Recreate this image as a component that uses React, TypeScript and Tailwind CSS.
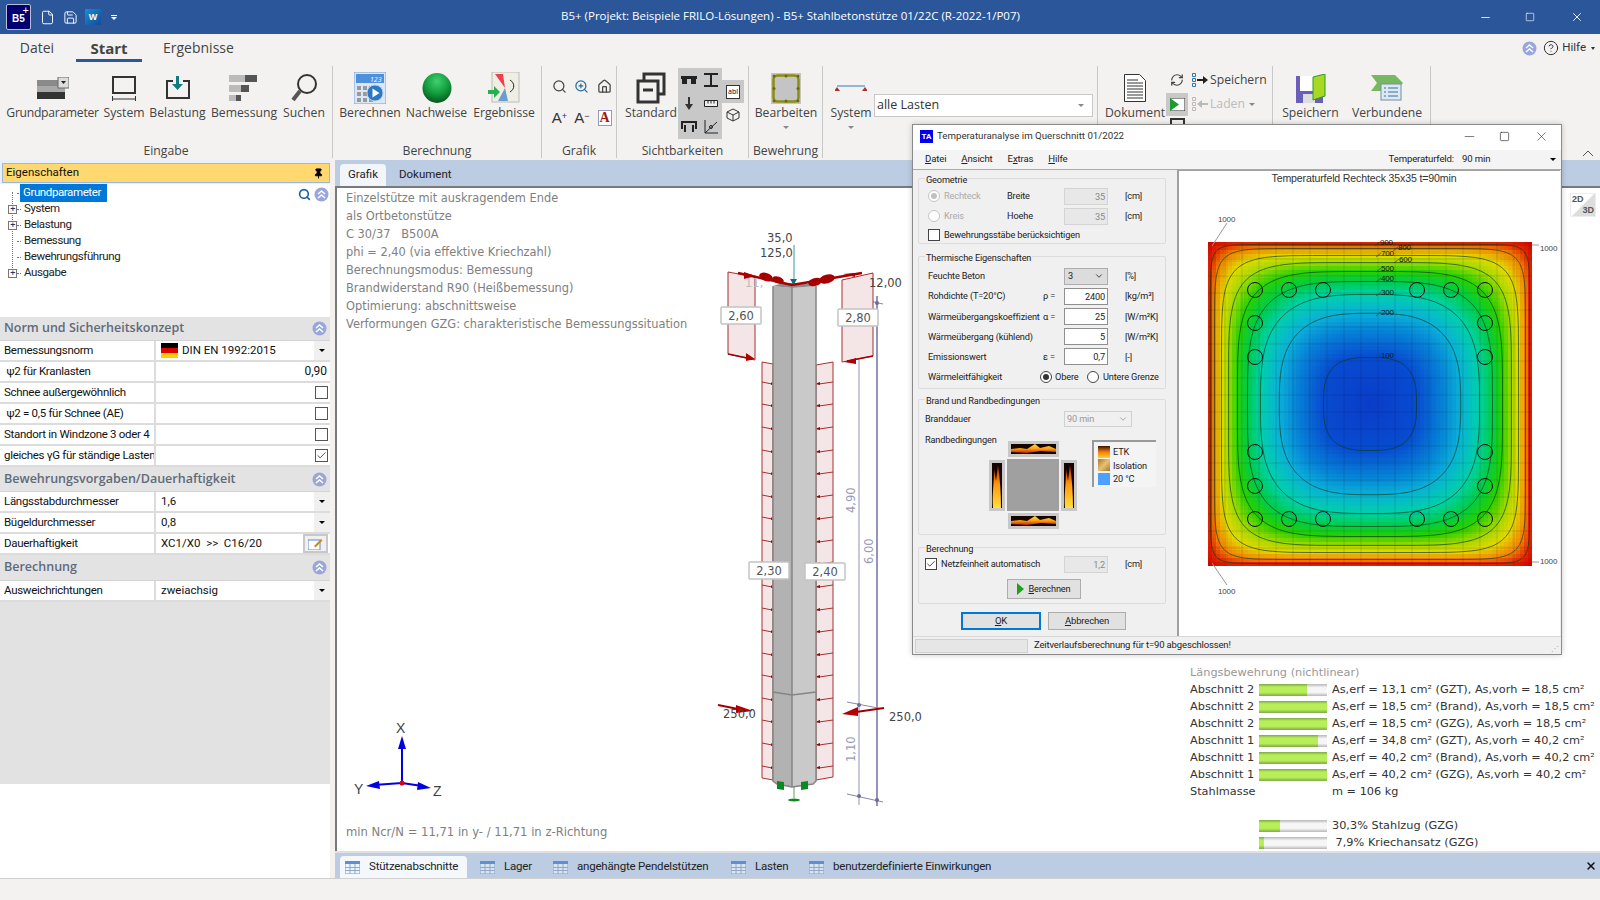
import type { ReactNode } from "react";
import { File, Save, Minus, Square, X, Search, ZoomIn, Home, HelpCircle, RefreshCw, Pin, Check, ChevronDown } from "lucide-react";

const ui = "font-['Open_Sans','Liberation_Sans',sans-serif]";

/* ---------- small shared bits ---------- */

const Chev = () => (
  <svg width="15" height="15" viewBox="0 0 15 15">
    <circle cx="7.5" cy="7.5" r="7" fill="#98a6dc" />
    <path d="M4 7l3.5-3 3.5 3M4 11l3.5-3 3.5 3" fill="none" stroke="#fff" strokeWidth="1.5" />
  </svg>
);

const Caret = () => <span className="block w-0 h-0 border-x-[3px] border-x-transparent border-t-[3px] border-t-[#888]" />;

const RibbonBtn = ({ w, label, icon, caret, tight }: { w: number; label: string; icon: ReactNode; caret?: boolean; tight?: boolean }) => (
  <div className="flex flex-col items-center shrink-0" style={{ width: w }}>
    <div className="h-[38px] pt-[6px] flex items-center justify-center">{icon}</div>
    <div className={"text-[12.2px] leading-[17px] text-[#444] whitespace-nowrap " + (tight ? "tracking-[-0.3px]" : "")}>{label}</div>
    {caret && <div className="mt-[5px]"><Caret /></div>}
  </div>
);

const RibbonGroup = ({ w, label, children, cls = "" }: { w: number; label?: string; children: ReactNode; cls?: string }) => (
  <div className="h-[92px] mt-[4px] border-r border-[#c8c8c8] flex flex-col shrink-0" style={{ width: w }}>
    <div className={"flex-1 min-h-0 flex " + cls}>{children}</div>
    <div className="h-[22px] pt-[7px] text-center text-[12.2px] leading-[16px] text-[#444]">{label}</div>
  </div>
);

/* ---------- ribbon icons ---------- */

const GrundIcon = () => (
  <svg width="32" height="22" viewBox="0 0 32 22">
    <rect y="3" width="28" height="6" fill="#8a8a8a" /><rect y="9" width="28" height="6" fill="#a8a8a8" /><rect y="15" width="28" height="7" fill="#333" />
    <rect x="21" y="0" width="11" height="11" fill="#ddd" stroke="#666" /><path d="M24 4h5l-2.5 3z" fill="#222" />
  </svg>
);
const SystemIcon = () => (
  <svg width="26" height="26" viewBox="0 0 26 26" fill="none" stroke="#333">
    <rect x="2" y="2" width="22" height="16" strokeWidth="2" /><path d="M1 24h24M1.5 21v5M24.5 21v5" />
  </svg>
);
const BelastungIcon = () => (
  <svg width="24" height="24" viewBox="0 0 24 24">
    <path d="M7 5H1v17h22V5h-6" fill="none" stroke="#333" strokeWidth="2" /><path d="M10 0h3v8h4l-5.500 6L6 8h4z" fill="#0f7c80" />
  </svg>
);
const BemessIcon = () => (
  <svg width="30" height="26" viewBox="0 0 30 26">
    <rect width="28" height="7" fill="#555" /><rect width="16" height="7" fill="#bbb" />
    <rect y="10" width="20" height="7" fill="#555" /><rect y="10" width="12" height="7" fill="#bbb" />
    <rect y="20" width="12" height="6" fill="#555" /><rect y="20" width="7" height="6" fill="#bbb" />
  </svg>
);
const LupeIcon = () => (
  <svg width="28" height="30" viewBox="0 0 28 30" fill="none" stroke="#333">
    <circle cx="17" cy="11" r="9" strokeWidth="2" /><path d="M10 18L3 27" strokeWidth="4" stroke="#555" />
  </svg>
);
const CalcIcon = () => (
  <svg width="32" height="32" viewBox="0 0 32 32">
    <rect width="32" height="32" fill="#dbe7f7" stroke="#7aa0d0" /><rect x="2" y="2" width="28" height="9" fill="#4f90dc" />
    <text x="16" y="10" fontSize="7" fill="#fff" fontStyle="italic">123</text>
    {[14, 20, 26].map((y) => [3, 9, 15].map((x) => <rect key={x + "-" + y} x={x} y={y} width="4" height="4" fill="#9a9a9a" />))}
    <circle cx="21" cy="21" r="8" fill="#2a78c8" stroke="#bcd" /><path d="M18.500 16.500l7 4.500-7 4.500z" fill="#fff" />
  </svg>
);
const Sphere = () => (
  <svg width="30" height="30" viewBox="0 0 30 30">
    <defs><radialGradient id="sph" cx="50%" cy="28%" r="70%"><stop offset="0" stopColor="#3fd070" /><stop offset=".6" stopColor="#129a3c" /><stop offset="1" stopColor="#0a5a20" /></radialGradient></defs>
    <ellipse cx="15" cy="15" rx="14.500" ry="15" fill="url(#sph)" />
  </svg>
);
const ErgIcon = () => (
  <svg width="32" height="32" viewBox="0 0 32 32">
    <rect x="4" width="27" height="30" fill="#efeee2" stroke="#bbb" /><path d="M7 2h8l2 14z" fill="#ee4050" /><path d="M17 16l3 13H10z" fill="#6b9ed0" />
    <path d="M22 8c5 3 5 9 0 12" fill="none" stroke="#222" /><path d="M0 18h6v-4l6 6-6 6v-4H0z" fill="#28b050" />
  </svg>
);
const WindowsIcon = () => (
  <svg width="30" height="32" viewBox="0 0 30 32" fill="none" stroke="#333" strokeWidth="3">
    <rect x="8" y="2" width="20" height="20" /><rect x="2" y="9" width="20" height="21" fill="#f3f2f1" /><path d="M7 18h10" />
  </svg>
);
const RebarIcon = () => (
  <svg width="30" height="31" viewBox="0 0 30 31">
    <rect width="30" height="31" fill="#c4c4c4" />
    <rect x="2.500" y="2.500" width="25" height="26" rx="4" fill="none" stroke="#8c8c14" strokeWidth="2.500" />
    {[[3, 3], [15, 3], [27, 3], [3, 15.500], [27, 15.500], [3, 28], [15, 28], [27, 28]].map(([x, y]) => <circle key={x + "-" + y} cx={x} cy={y} r="1.500" fill="#6a6a10" />)}
  </svg>
);
const DocIcon = () => (
  <svg width="22" height="28" viewBox="0 0 22 28" fill="#fff" stroke="#333">
    <path d="M.5.500h15l6 6v21H.5z" /><path d="M3 6h11M3 9h16M3 12h16M3 15h16M3 18h16M3 21h16M3 24h16" />
  </svg>
);
const FloppyIcon = () => (
  <svg width="30" height="29" viewBox="0 0 30 29">
    <rect y="2" width="27" height="27" fill="#6a5fb8" /><rect x="4" y="2" width="18" height="15" fill="#fff" /><rect x="7" y="20" width="12" height="9" fill="#ddd" />
    <path d="M17 3l12-3v22l-12 4z" fill="#a8d820" stroke="#2a9a30" />
  </svg>
);
const LinkIcon = () => (
  <svg width="32" height="26" viewBox="0 0 32 26">
    <path d="M0 0h24l8 8-8 8H0l6-8z" fill="#78b860" /><rect x="10" y="9" width="20" height="16" fill="#dfe8f2" stroke="#7090a8" />
    <path d="M13 13h2M17 13h10M13 17h2M17 17h10M13 21h2M17 21h10" stroke="#3070a0" />
  </svg>
);
const ABtn = ({ t, s }: { t: string; s?: string }) => (
  <span className="text-[15px] leading-none text-[#333] font-['Liberation_Sans',sans-serif]">{t}<sup className="text-[9px]">{s}</sup></span>
);

const Ribbon = () => (
  <div className="h-[98px] bg-[#f3f2f1] flex">
    <RibbonGroup w={333} label="Eingabe" cls="pl-[7px] gap-[6px]">
      <RibbonBtn w={91} label="Grundparameter" tight icon={<GrundIcon />} />
      <RibbonBtn w={40} label="System" icon={<SystemIcon />} />
      <RibbonBtn w={55} label="Belastung" icon={<BelastungIcon />} />
      <RibbonBtn w={66} label="Bemessung" icon={<BemessIcon />} />
      <RibbonBtn w={42} label="Suchen" icon={<LupeIcon />} />
    </RibbonGroup>
    <RibbonGroup w={209} label="Berechnung" cls="pl-[7px] gap-[6px]">
      <RibbonBtn w={60} label="Berechnen" icon={<CalcIcon />} />
      <RibbonBtn w={61} label="Nachweise" icon={<Sphere />} />
      <RibbonBtn w={62} label="Ergebnisse" icon={<ErgIcon />} />
    </RibbonGroup>
    <RibbonGroup w={75} label="Grafik">
      <div className="grid grid-cols-3 grid-rows-2 w-full h-[62px] pl-[6px] place-items-center text-[#444] mt-[5px]">
        <Search size={15} /><ZoomIn size={15} className="text-[#2a6a9a]" /><Home size={15} />
        <ABtn t="A" s="+" /><ABtn t="A" s="−" /><span className="text-[14px] font-bold text-[#a01818] border border-[#99b] leading-[14px] px-[1px] bg-white font-['Liberation_Serif',serif]">A</span>
      </div>
    </RibbonGroup>
    <RibbonGroup w={132} label="Sichtbarkeiten" cls="pl-[7px] gap-0">
      <RibbonBtn w={54} label="Standard" icon={<WindowsIcon />} />
      <div className="w-[44px] h-[71px] mt-[2px] bg-[#c8c8c8] grid grid-cols-2 grid-rows-3 place-items-center">
        <svg width="16" height="8" viewBox="0 0 16 8"><path d="M0 0h16v3H0zM1 3h5v5H1zM10 3h5v5h-5z" fill="#222" /></svg>
        <svg width="16" height="14" viewBox="0 0 16 14"><path d="M1 1h14M1 13h14M8 1v12" stroke="#222" strokeWidth="2" /></svg>
        <svg width="10" height="13" viewBox="0 0 10 13"><path d="M4 0h2v7h3l-4 6-4-6h3z" fill="#333" /></svg>
        <svg width="14" height="7" viewBox="0 0 14 7"><path d="M.5.500h13v6H.5zM4 .5v3M7 .5v3M10 .5v3" fill="#eee" stroke="#222" /></svg>
        <svg width="16" height="13" viewBox="0 0 16 13"><path d="M1 8V1h14v7" fill="none" stroke="#222" strokeWidth="2" /><path d="M4 4v7M12 4v7" stroke="#222" strokeWidth="2" /></svg>
        <svg width="16" height="16" viewBox="0 0 16 16" fill="none" stroke="#222"><path d="M2 1v13h13M2 14L14 3" /><circle cx="8" cy="8" r="1.500" /></svg>
      </div>
      <div className="flex flex-col items-center w-[22px] mt-[14px]">
        <div className="w-[22px] h-[23px] bg-[#c8c8c8] flex items-center justify-center"><span className="text-[7px] leading-[12px] px-[1px] border border-[#333] bg-white text-black">abl</span></div>
        <svg className="mt-[5px]" width="14" height="14" viewBox="0 0 14 14" fill="none" stroke="#333"><path d="M7 1l6 3v6l-6 3-6-3V4zM1 4l6 3 6-3M7 7v6" /></svg>
      </div>
    </RibbonGroup>
    <RibbonGroup w={74} label="Bewehrung">
      <div className="w-full"><RibbonBtn w={74} label="Bearbeiten" icon={<RebarIcon />} caret /></div>
    </RibbonGroup>
    <RibbonGroup w={275} cls="pl-[5px]">
      <RibbonBtn w={46} label="System" caret icon={
        <svg className="mt-[2px]" width="32" height="10" viewBox="0 0 32 10"><path d="M2 2h28" stroke="#70a0d8" strokeWidth="1.500" /><path d="M2 3l3 4H-1zM30 3l3 4h-6z" fill="#b03030" /></svg>
      } />
      <div className="w-[219px] h-[23px] mt-[28px] bg-white border border-[#c8c8c8] flex items-center justify-between pl-[2px] pr-[8px] text-[12.5px] text-[#333]">alle Lasten<Caret /></div>
    </RibbonGroup>
    <RibbonGroup w={175} cls="pl-[8px]">
      <RibbonBtn w={58} label="Dokument" icon={<DocIcon />} />
      <div className="w-[108px] mt-[2px] flex flex-col text-[12.2px] text-[#444] whitespace-nowrap">
        <div className="h-[24px] shrink-0 flex items-center">
          <RefreshCw size={14} className="ml-[6px] mr-[8px] shrink-0" />
          <svg width="16" height="14" viewBox="0 0 16 14" className="mr-[2px] shrink-0"><path d="M.5.500h3v3h-3zM.5 5.500h3v3h-3zM.5 10.500h3v3h-3z" fill="#fff" stroke="#2a7ab0" /><path d="M5 6h6V3l5 4-5 4V8H5z" fill="#222" /></svg>
          Speichern
        </div>
        <div className="h-[24px] shrink-0 flex items-center text-[#bbb]">
          <span className="w-[22px] h-[23px] shrink-0 bg-[#c8c8c8] ml-[2px] mr-[4px] flex items-center justify-center">
            <svg width="15" height="13" viewBox="0 0 15 13"><rect width="15" height="13" fill="#fff" stroke="#222" /><path d="M0 0l9 6.500-9 6.500z" fill="#1e9a30" /></svg>
          </span>
          <svg width="16" height="14" viewBox="0 0 16 14" className="mr-[2px] shrink-0"><path d="M.5.500h3v3h-3zM.5 5.500h3v3h-3zM.5 10.500h3v3h-3z" fill="none" stroke="#bbb" /><path d="M16 6h-6V3L5 7l5 4V8h6z" fill="#bbb" /></svg>
          Laden <span className="ml-[4px]"><Caret /></span>
        </div>
        <div className="h-[8px] shrink-0 pl-[6px] pt-[2px]"><span className="block w-[15px] h-[6px] border-2 border-b-0 border-[#333]" /></div>
      </div>
    </RibbonGroup>
    <RibbonGroup w={158} cls="pl-[9px] gap-[14px]">
      <RibbonBtn w={57} label="Speichern" icon={<FloppyIcon />} />
      <RibbonBtn w={68} label="Verbundene" icon={<LinkIcon />} />
    </RibbonGroup>
    <div className="flex-1 relative">
      <svg className="absolute right-[6px] bottom-[2px]" width="12" height="8" viewBox="0 0 12 8" fill="none" stroke="#555"><path d="M1 6l5-5 5 5" /></svg>
    </div>
  </div>
);

/* ---------- left panel ---------- */

type Row = { l: string; v?: ReactNode; arrow?: boolean; right?: ReactNode };

const Box = ({ on }: { on?: boolean }) => (
  <span className="w-[13px] h-[13px] border border-[#555] bg-white flex items-center justify-center">{on && <Check size={11} className="text-[#444]" />}</span>
);

const sections: { t: string; h: number; rows: Row[] }[] = [
  {
    t: "Norm und Sicherheitskonzept", h: 24, rows: [
      { l: "Bemessungsnorm", arrow: true, v: <span className="flex items-center gap-[4px]"><span className="w-[17px] h-[15px] bg-[linear-gradient(#000_33%,#d00_33%,#d00_66%,#fc0_66%)]" />DIN EN 1992:2015</span> },
      { l: "\u00a0ψ2 für Kranlasten", right: <span className="text-[12px] pr-[1px]">0,90</span> },
      { l: "Schnee außergewöhnlich", right: <Box /> },
      { l: "\u00a0ψ2 = 0,5 für Schnee (AE)", right: <Box /> },
      { l: "Standort in Windzone 3 oder 4", right: <Box /> },
      { l: "gleiches γG für ständige Lasten", right: <Box on /> },
    ],
  },
  {
    t: "Bewehrungsvorgaben/Dauerhaftigkeit", h: 25, rows: [
      { l: "Längsstabdurchmesser", v: "1,6", arrow: true },
      { l: "Bügeldurchmesser", v: "0,8", arrow: true },
      { l: "Dauerhaftigkeit", v: "XC1/X0  >>  C16/20", right: (
        <span className="w-[25px] h-[19px] border-2 border-[#c8c8c8] bg-[#f0f0f0] flex items-center justify-center">
          <svg width="15" height="12" viewBox="0 0 15 12"><rect y="2" width="12" height="10" fill="#fff" stroke="#5a8ac0" /><path d="M6 8l7-7 1.500 1.500-7 7z" fill="#c09020" /></svg>
        </span>
      ) },
    ],
  },
  { t: "Berechnung", h: 26, rows: [{ l: "Ausweichrichtungen", v: "zweiachsig", arrow: true }] },
];

const treeItems = [
  { t: "Grundparameter", sel: true }, { t: "System", plus: true }, { t: "Belastung", plus: true },
  { t: "Bemessung" }, { t: "Bewehrungsführung" }, { t: "Ausgabe", plus: true },
];

const LeftPanel = () => (
  <div className="w-[330px] shrink-0 flex flex-col bg-white font-['Roboto',sans-serif]">
    <div className="h-[24px] bg-[#e9f0f9] pt-[3px] pl-[2px]">
      <div className="h-[20px] bg-[#ffd86f] border border-[#9ab8e0] flex items-center justify-between px-[3px] text-[11.5px] text-[#111]">
        Eigenschaften <Pin size={11} className="mr-[2px] text-black" fill="black" />
      </div>
    </div>
    <div className="h-[133px] relative pt-[1px]">
      <span className="absolute left-[12px] top-[8px] h-[80px] border-l border-dotted border-[#777]" />
      {treeItems.map((i) => (
        <div key={i.t} className="h-[16px] flex items-center pl-[8px] text-[11.5px] tracking-[-0.4px] text-[#222] relative">
          {i.plus ? <span className="w-[9px] h-[9px] border border-[#777] bg-white text-[9px] leading-[7px] text-center text-[#236] z-10">+</span> : <span className="w-[9px]" />}
          <span className="w-[4px] border-b border-dotted border-[#777]" />
          <span className={i.sel ? "bg-[#0078d7] text-white pl-[3px] pr-[6px] -ml-[1px]" : "pl-[3px]"}>{i.t}</span>
        </div>
      ))}
      <div className="absolute right-[1px] top-[3px] flex items-center gap-[3px]">
        <Search size={13} strokeWidth={3} className="text-[#1c5fa8]" /><Chev />
      </div>
    </div>
    {sections.map((s) => (
      <div key={s.t}>
        <div className={ui + " bg-[#e3e3e3] border-b border-[#d4d4d4] flex items-center justify-between pl-[4px] pr-[3px] text-[12.5px] font-semibold text-[#5f6a7a]"} style={{ height: s.h }}>
          {s.t}<Chev />
        </div>
        {s.rows.map((r) => (
          <div key={r.l} className="h-[21px] flex border-b-2 border-[#dcdcdc] text-[11.5px] text-[#111]">
            <div className="w-[156px] border-r-2 border-[#dcdcdc] pl-[4px] leading-[18px] tracking-[-0.3px] whitespace-nowrap overflow-hidden">{r.l}</div>
            <div className="flex-1 flex items-center justify-between pl-[5px] whitespace-pre">
              <span>{r.v}</span>
              {r.arrow && <span className="w-[16px] h-full bg-[#f0f0f0] flex items-center justify-center"><span className="w-0 h-0 border-x-[3px] border-x-transparent border-t-[3px] border-t-black" /></span>}
              {r.right && <span className="pr-[2px]">{r.right}</span>}
            </div>
          </div>
        ))}
      </div>
    ))}
    <div className="h-[182px] bg-[#e2e2e2]" />
    <div className="flex-1 bg-white" />
  </div>
);

/* ---------- main view ---------- */

const infoLines = [
  "Einzelstütze mit auskragendem Ende", "als Ortbetonstütze", "C 30/37   B500A", "phi = 2,40 (via effektive Kriechzahl)",
  "Berechnungsmodus: Bemessung", "Brandwiderstand R90 (Heißbemessung)", "Optimierung: abschnittsweise",
  "Verformungen GZG: charakteristische Bemessungssituation",
];

const results = [
  { a: "Abschnitt 2", p: 71, t: "As,erf = 13,1 cm² (GZT), As,vorh = 18,5 cm²" },
  { a: "Abschnitt 2", p: 100, t: "As,erf = 18,5 cm² (Brand), As,vorh = 18,5 cm²" },
  { a: "Abschnitt 2", p: 100, t: "As,erf = 18,5 cm² (GZG), As,vorh = 18,5 cm²" },
  { a: "Abschnitt 1", p: 87, t: "As,erf = 34,8 cm² (GZT), As,vorh = 40,2 cm²" },
  { a: "Abschnitt 1", p: 100, t: "As,erf = 40,2 cm² (Brand), As,vorh = 40,2 cm²" },
  { a: "Abschnitt 1", p: 100, t: "As,erf = 40,2 cm² (GZG), As,vorh = 40,2 cm²" },
];

const Bar = ({ p }: { p: number }) => (
  <div className="w-[68px] h-[12px] shrink-0 bg-[linear-gradient(#b8b8b8,#f6f6f6_30%,#f6f6f6_70%,#b8b8b8)]">
    <div className="h-full bg-[linear-gradient(#7fa84a,#b8ee58_25%,#b8ee58_70%,#7fa84a)]" style={{ width: p + "%" }} />
  </div>
);

const ResRow = ({ a, p, t }: { a?: string; p?: number; t: string }) => (
  <div className="h-[17px] flex items-center whitespace-pre">
    <span className="w-[69px] shrink-0 text-[#333]">{a}</span>
    {p !== undefined ? <Bar p={p} /> : <span className="w-[68px] shrink-0" />}
    <span className="ml-[5px] shrink-0 text-[#333]">{t}</span>
  </div>
);

const Results = () => (
  <div className="w-[410px] shrink-0 text-[11.3px] leading-[17px] overflow-hidden">
    <div className="h-[17px] text-[#999]">Längsbewehrung (nichtlinear)</div>
    {results.map((r, i) => <ResRow key={i} a={r.a} p={r.p} t={r.t} />)}
    <ResRow a="Stahlmasse" t="m = 106 kg" />
    <div className="h-[17px]" />
    <ResRow p={30.3} t="30,3% Stahlzug (GZG)" />
    <ResRow p={7.9} t=" 7,9% Kriechansatz (GZG)" />
  </div>
);

const bottomTabs = [
  { t: "Stützenabschnitte", w: "w-[127px] mr-[8px] bg-[#f4f8fd] rounded-t-[4px]", on: true },
  { t: "Lager", w: "w-[73px]" }, { t: "angehängte Pendelstützen", w: "w-[178px]" }, { t: "Lasten", w: "w-[78px]" }, { t: "benutzerdefinierte Einwirkungen", w: "w-[240px]" },
];

const GridIcon = ({ on }: { on?: boolean }) => (
  <svg width="15" height="13" viewBox="0 0 15 13" className="shrink-0">
    <rect width="15" height="13" fill={on ? "#eef4fb" : "#d9e4f2"} stroke="#7f9fc8" /><rect width="15" height="3" fill="#5f8fd0" />
    <path d="M5 3v10M10 3v10M0 6.500h15M0 9.500h15" stroke="#8fa8c8" />
  </svg>
);

const MainView = () => (
  <div className="flex-1 min-w-0 flex flex-col pl-[5px]">
    <div className="h-[26px] bg-[#bccde3] flex items-end pl-[5px] text-[11.5px] text-[#222] font-['Roboto',sans-serif]">
      <div className="w-[46px] h-[22px] bg-[#f2f6fb] rounded-t-[4px] flex items-center justify-center">Grafik</div>
      <div className="ml-[13px] h-[22px] flex items-center">Dokument</div>
    </div>
    <div className="flex-1 min-h-0 border-t-2 border-l-2 border-[#7a7a7a] bg-white flex flex-col pl-[9px] pt-[1px] font-['DejaVu_Sans',sans-serif] text-[11.4px] leading-[18px] text-[#808080] relative">
      {infoLines.map((l) => <div key={l} className="whitespace-pre">{l}</div>)}
      <div className="mt-auto flex items-end justify-between">
        <div className="mb-[10px] text-[11.6px]">min Ncr/N = 11,71 in y- / 11,71 in z-Richtung</div>
        <Results />
      </div>
      <div className="absolute right-[4px] top-[5px] w-[26px] h-[24px] text-[9px] leading-[11px] font-bold text-[#555] bg-[linear-gradient(135deg,#fff_48%,#ddd_52%)] border border-[#eee] font-['Liberation_Sans',sans-serif]">
        <div className="pl-[1px]">2D</div><div className="text-right pr-[1px]">3D</div>
      </div>
    </div>
    <div className="h-[27px] border-t-2 border-[#e0e0e0] bg-[#bccde3] flex items-end pl-[5px] text-[11.5px] tracking-[-0.2px] text-[#222] relative font-['Roboto',sans-serif]">
      {bottomTabs.map((t) => (
        <div key={t.t} className={t.w + " h-[22px] flex items-center gap-[9px] pl-[5px] whitespace-nowrap"}>
          <GridIcon on={t.on} />{t.t}
        </div>
      ))}
      <X size={12} strokeWidth={3} className="absolute right-[3px] top-[7px] text-[#111]" />
    </div>
  </div>
);

/* ---------- column drawing ---------- */

const lowerTicks = [384, 406, 429, 452, 474, 497, 519, 542, 564, 587, 610, 632, 655, 677, 700, 722, 745, 768];

const ColumnDrawing = () => (
  <svg className="absolute left-0 top-0 pointer-events-none" width="1600" height="900" viewBox="0 0 1600 900" fontFamily="DejaVu Sans, sans-serif">
    {/* dimension lines */}
    <path d="M859 292V805" stroke="#c8c8dc" strokeWidth="2" />
    <path d="M877 296V806" stroke="#7070a0" strokeWidth="1.500" />
    <path d="M847 296l36 8M847 702l36 7M847 794l36 8" stroke="#8888aa" />
    {[[859, 299], [877, 303], [859, 705], [859, 796], [877, 800]].map(([x, y]) => <circle key={x + "-" + y} cx={x} cy={y} r="2" fill="#6c6c98" />)}
    <g fill="#9a9ab8" fontSize="11.500">
      <text transform="translate(855 513) rotate(-90)">4,90</text>
      <text transform="translate(873 564) rotate(-90)">6,00</text>
      <text transform="translate(855 762) rotate(-90)">1,10</text>
    </g>
    {/* wind panels */}
    <path d="M728 272l27 5v83l-27-6zM842 280l31-7v83l-31 6zM762 362l11 2v416l-11-2zM816 365l17-3v415l-17 3z" fill="#f4e6e6" stroke="#a83030" />
    <path d="M728 354l24 5M873 356l-26 5" stroke="#a00000" strokeWidth="1.500" />
    <path d="M746 353l9 6-9 2zM844 362l12-4v6z" fill="#b00000" />
    {lowerTicks.map((y) => (
      <g key={y} stroke="#a83030">
        <path d={`M762 ${y - 2}l10 2M833 ${y - 2}l-14 2`} />
        <path d={`M771 ${y - 2}l2 2-2 1zM820 ${y - 2}l-5 2 5 1z`} fill="#a00000" stroke="none" />
      </g>
    ))}
    {/* column */}
    <path d="M773 286l19 2v499l-15-3-4-3z" fill="#b2b2b2" />
    <path d="M792 288l24-2v495l-3 3-21 3z" fill="#c9c9c9" />
    <path d="M773 286l10-3h22l11 3-24 2z" fill="#8a8a8a" />
    <path d="M773 286v495l4 3 15 3 21-3 3-3V286M792 288v499M773 692l19 3 24-3" fill="none" stroke="#858585" strokeWidth="1.500" />
    {/* top load */}
    <path d="M794 245v38" stroke="#3a9a9a" />
    <path d="M738 273l54 12 70-12" fill="none" stroke="#a80000" strokeWidth="2.500" />
    <path d="M744 272l12 4-12 3zM855 273l-12 1 12 3z" fill="#a80000" />
    {[[766, 277, 7, 4, 18], [778, 280, 6, 3.500, 18], [815, 282, 7, 4, -15], [827, 279, 8, 4.500, -15]].map(([x, y, a, b, r]) => (
      <ellipse key={x} cx={x} cy={y} rx={a} ry={b} fill="#a80000" transform={`rotate(${r} ${x} ${y})`} />
    ))}
    <path d="M790 279h7l-3.500 6z" fill="#0d6e6e" />
    {/* supports */}
    <path d="M777 781l7 1v8l-7-1zM801 782l7-1v8l-7 1z" fill="#0a8a1e" />
    <path d="M794 787v11" stroke="#5aa05a" /><ellipse cx="794" cy="800" rx="6" ry="1.500" fill="#0a8a1e" />
    {/* end loads */}
    <path d="M718 705l20 4" stroke="#a00000" strokeWidth="2" /><path d="M736 705l17 6-17 2z" fill="#b00000" />
    <path d="M884 708l-28 4" stroke="#a00000" strokeWidth="2" /><path d="M858 707l-16 7 16 2z" fill="#b00000" />
    {/* value labels */}
    <g fontSize="11.500" fill="#444">
      <text x="767" y="242">35,0</text>
      <text x="760" y="257">125,0</text>
      <text x="869" y="287">12,00</text>
      <text x="745" y="287" fill="#bbb">11,</text>
      <text x="723" y="718">250,0</text>
      <text x="889" y="721">250,0</text>
    </g>
    {[[721, 307, "2,60"], [838, 309, "2,80"], [749, 562, "2,30"], [805, 563, "2,40"]].map(([x, y, t]) => (
      <g key={t as string}>
        <rect x={x as number} y={y as number} width="40" height="17" fill="#fff" stroke="#c4c4c4" strokeWidth="1.500" rx="1" />
        <text x={(x as number) + 20} y={(y as number) + 13} textAnchor="middle" fontSize="11.500" fill="#555">{t}</text>
      </g>
    ))}
    {/* axes */}
    <path d="M402 783V745" stroke="#0000e0" strokeWidth="2" /><path d="M402 736l4 13h-8z" fill="#0000e0" />
    <path d="M402 783l-28 2" stroke="#0000e0" strokeWidth="2" /><path d="M366 786l13-5 1 8z" fill="#0000e0" />
    <path d="M402 783l20 3" stroke="#0000e0" strokeWidth="2" /><path d="M431 788l-13-6-1 8z" fill="#0000e0" />
    <circle cx="402" cy="783" r="2.500" fill="#e00000" />
    <g fontSize="14" fill="#444" fontFamily="Liberation Sans, sans-serif">
      <text x="396" y="733">X</text><text x="354" y="794">Y</text><text x="433" y="796">Z</text>
    </g>
  </svg>
);

/* ---------- temperature chart ---------- */

const stops: [number, number[]][] = [
  [0, [10, 60, 200]], [0.29, [8, 76, 208]], [0.45, [6, 130, 214]], [0.56, [10, 176, 216]], [0.676, [0, 208, 170]], [0.756, [0, 204, 70]],
  [0.818, [40, 208, 0]], [0.873, [160, 216, 0]], [0.917, [226, 216, 0]], [0.96, [240, 128, 0]], [0.985, [224, 40, 0]], [1.01, [200, 0, 0]],
];

const expo = (r: number) => Math.max(2.9, 1.5 + 0.55 / (1.02 - r));

const level = (x: number, y: number) => {
  let lo = 0.001, hi = 1.015;
  for (let i = 0; i < 14; i++) {
    const r = (lo + hi) / 2, p = expo(r);
    if (Math.pow(x / r, p) + Math.pow(y / r, p) > 1) lo = r; else hi = r;
  }
  return hi;
};

const tempColor = (r: number) => {
  for (let i = 1; i < stops.length; i++) {
    if (r <= stops[i][0]) {
      const [a, ca] = stops[i - 1], [b, cb] = stops[i];
      const k = (r - a) / (b - a);
      return `rgb(${ca.map((v, j) => Math.round(v + (cb[j] - v) * k)).join(",")})`;
    }
  }
  return "rgb(200,0,0)";
};

const PX = 1208, PY = 242, PS = 324, CELL = 4;
const cells: { x: number; y: number; c: string }[] = [];
for (let j = 0; j < PS / CELL; j++) {
  for (let i = 0; i < PS / CELL; i++) {
    const x = Math.abs(((i + 0.5) * CELL) / (PS / 2) - 1), y = Math.abs(((j + 0.5) * CELL) / (PS / 2) - 1);
    cells.push({ x: PX + i * CELL, y: PY + j * CELL, c: tempColor(level(x, y)) });
  }
}

const contour = (r: number) => {
  const p = expo(r), pts: string[] = [];
  for (let k = 0; k < 160; k++) {
    const t = (k / 160) * Math.PI * 2, c = Math.cos(t), s = Math.sin(t);
    const x = PX + PS / 2 + (PS / 2) * r * Math.sign(c) * Math.pow(Math.abs(c), 2 / p);
    const y = PY + PS / 2 + (PS / 2) * r * Math.sign(s) * Math.pow(Math.abs(s), 2 / p);
    pts.push(x.toFixed(1) + "," + y.toFixed(1));
  }
  return "M" + pts.join("L") + "Z";
};

const levels = [0.287, 0.56, 0.676, 0.756, 0.818, 0.873, 0.917, 0.96, 0.985];
const isoLabels = [["100", 1381, 358], ["200", 1381, 315], ["300", 1381, 295], ["400", 1381, 281], ["500", 1381, 271], ["600", 1399, 262], ["700", 1381, 256], ["800", 1398, 250], ["900", 1380, 245]] as const;
const bars = [[1255, 290], [1289, 290], [1323, 290], [1417, 290], [1451, 290], [1485, 290], [1255, 323], [1485, 323], [1255, 357], [1485, 357], [1255, 452], [1485, 452], [1255, 486], [1485, 486], [1255, 519], [1289, 519], [1323, 519], [1417, 519], [1451, 519], [1485, 519]];

const HeatChart = () => (
  <svg className="block" width="381" height="465" viewBox="1179 171 381 465" fontFamily="Liberation Sans, sans-serif">
    <text x="1364" y="182" textAnchor="middle" fontSize="10.600" fill="#333">Temperaturfeld Rechteck 35x35 t=90min</text>
    <g shapeRendering="crispEdges">
      {cells.map((c, i) => <rect key={i} x={c.x} y={c.y} width={CELL} height={CELL} fill={c.c} />)}
    </g>
    <g stroke="#000" strokeOpacity=".13">
      {Array.from({ length: 18 }, (_, i) => PX + 17 + i * 17).map((v) => <path key={v} d={`M${v} ${PY}V${PY + PS}`} />)}
      {Array.from({ length: 18 }, (_, i) => PY + 17 + i * 17).map((v) => <path key={v} d={`M${PX} ${v}H${PX + PS}`} />)}
    </g>
    {levels.map((r) => <path key={r} d={contour(r)} fill="none" stroke="#063a18" strokeOpacity=".65" />)}
    {bars.map(([x, y]) => <circle key={x + "-" + y} cx={x} cy={y} r="7.500" fill="none" stroke="#111" />)}
    <g fontSize="8" fill="#111">
      {isoLabels.map(([t, x, y]) => (
        <g key={t}><path d={`M${x - 5} ${y + 1}l5-4`} stroke="#333" strokeWidth=".6" /><text x={x} y={y}>{t}</text></g>
      ))}
    </g>
    <g fontSize="8" fill="#444" stroke="none">
      <path d="M1212 246l15-23M1212 563l15 22M1532 245h7M1532 562h7" stroke="#999" />
      <text x="1218" y="222">1000</text><text x="1218" y="594">1000</text>
      <text x="1540" y="251">1000</text><text x="1540" y="564">1000</text>
    </g>
  </svg>
);

/* ---------- dialog ---------- */

const DInput = ({ v, off }: { v: string; off?: boolean }) => (
  <div className={"w-[44px] h-[17px] text-right pr-[2px] leading-[15px] border " + (off ? "bg-[#e8e8e8] border-[#d4d4d4] text-[#888]" : "bg-white border-[#8f8f8f] text-[#222]")}>{v}</div>
);

const DRadio = ({ on, off }: { on?: boolean; off?: boolean }) => (
  <span className={"w-[12px] h-[12px] shrink-0 rounded-full border flex items-center justify-center bg-white " + (off ? "border-[#c4c4c4] bg-[#f0f0f0]" : "border-[#444]")}>
    {on && <span className={"w-[6px] h-[6px] rounded-full " + (off ? "bg-[#c0c0c0]" : "bg-[#333]")} />}
  </span>
);

const GroupBox = ({ title, h, mt, children }: { title: string; h: number; mt: number; children: ReactNode }) => (
  <div className="relative border border-[#dcdcdc] rounded-[2px] w-[248px]" style={{ height: h, marginTop: mt }}>
    <span className="absolute left-[6px] -top-[5px] bg-[#f0f0f0] px-[1px] leading-[12px] text-[#222]">{title}</span>
    {children}
  </div>
);

const thermo = [
  { l: "Rohdichte (T=20°C)", s: "ρ =", v: "2400", u: "[kg/m³]" },
  { l: "Wärmeübergangskoeffizient", s: "α =", v: "25", u: "[W/m²K]" },
  { l: "Wärmeübergang (kühlend)", s: "", v: "5", u: "[W/m²K]" },
  { l: "Emissionswert", s: "ε =", v: "0,7", u: "[-]" },
];

const Flame = ({ vertical, id }: { vertical?: boolean; id: string }) => (
  <div className={(vertical ? "w-[16px] h-[51px]" : "w-[51px] h-[16px]") + " bg-[#c8c8c8] p-[3px] flex"}>
    <svg className="w-full h-full" viewBox={vertical ? "0 0 10 45" : "0 0 45 10"} preserveAspectRatio="none">
      <defs>
        <linearGradient id={id} x1="0" y1={vertical ? "1" : "0"} x2="0" y2={vertical ? "0" : "1"}>
          <stop offset="0" stopColor="#ffe040" /><stop offset=".55" stopColor="#ff9810" /><stop offset="1" stopColor="#b02800" />
        </linearGradient>
      </defs>
      <rect width="45" height="45" fill="#140500" />
      {vertical
        ? <path d="M1 45C0 30 2 22 2 6l2 12 2-16c2 14 3 28 3 43z" fill={`url(#${id})`} />
        : <path d="M0 8V5l9-1 7 1 8-5 5 4 9-2 7 3v3l-15-1-14 2z" fill={`url(#${id})`} />}
    </svg>
  </div>
);

const Und = ({ a, b }: { a: string; b: string }) => <span><span className="underline">{a}</span>{b}</span>;

const Dialog = () => (
  <div className="absolute left-[912px] top-[124px] w-[650px] h-[531px] bg-[#f0f0f0] border border-[#8a8a8a] flex flex-col font-['Roboto',sans-serif] text-[9.2px] tracking-[-0.15px] text-[#222] shadow-[0_0_6px_rgba(0,0,0,.2)]">
    <div className="h-[25px] bg-white flex items-center pb-[3px] pl-[7px] text-[9.700px] tracking-normal text-[#333]">
      <span className="w-[13px] h-[13px] bg-[#0000f0] text-white text-[8px] leading-[13px] text-center font-bold mr-[4px]">TA</span>
      Temperaturanalyse im Querschnitt 01/2022
      <div className="ml-auto flex items-center text-[#333]">
        <Minus size={15} strokeWidth={1} className="mr-[22px]" /><Square size={11} strokeWidth={1.500} className="mr-[24px]" /><X size={15} strokeWidth={1} className="mr-[12px]" />
      </div>
    </div>
    <div className="h-[20px] border-b border-[#aaa] bg-[#f4f4f4] flex items-center pl-[12px] gap-[15px] text-[9.600px] relative">
      <Und a="D" b="atei" /><Und a="A" b="nsicht" /><span>E<span className="underline">x</span>tras</span><Und a="H" b="ilfe" />
      <div className="ml-auto flex items-center mr-[5px]">
        <span className="mr-[8px]">Temperaturfeld:</span>
        <span className="w-[94px] flex items-center justify-between">90 min <span className="w-0 h-0 border-x-[3px] border-x-transparent border-t-[3px] border-t-black" /></span>
      </div>
    </div>
    <div className="flex-1 min-h-0 flex">
      <div className="w-[264px] pl-[5px] shrink-0">
        <GroupBox title="Geometrie" h={66} mt={8}>
          <div className="pl-[9px] pt-[7px]">
            <div className="h-[20px] flex items-center"><DRadio on off /><span className="ml-[4px] w-[63px] text-[#aaa]">Rechteck</span><span className="w-[57px]">Breite</span><DInput v="35" off /><span className="ml-[17px]">[cm]</span></div>
            <div className="h-[20px] flex items-center"><DRadio off /><span className="ml-[4px] w-[63px] text-[#aaa]">Kreis</span><span className="w-[57px]">Hoehe</span><DInput v="35" off /><span className="ml-[17px]">[cm]</span></div>
            <div className="h-[18px] flex items-center"><span className="w-[12px] h-[12px] border border-[#444] bg-white mr-[4px]" />Bewehrungsstäbe berücksichtigen</div>
          </div>
        </GroupBox>
        <GroupBox title="Thermische Eigenschaften" h={133} mt={12}>
          <div className="pl-[9px] pt-[9px] grid grid-cols-[114px_22px_44px_17px_auto] auto-rows-[20.200px] items-center">
            <span>Feuchte Beton</span><span />
            <span className="w-[44px] h-[17px] bg-[#dcdcdc] border border-[#adadad] flex items-center justify-between px-[3px]">3<ChevronDown size={10} /></span><span /><span>[%]</span>
            {thermo.map((t) => [
              <span key={t.l + 1} className="whitespace-nowrap">{t.l}</span>,
              <span key={t.l + 2} className="pl-[1px]">{t.s}</span>,
              <DInput key={t.l + 3} v={t.v} />,
              <span key={t.l + 4} />,
              <span key={t.l + 5} className="whitespace-nowrap">{t.u}</span>,
            ])}
            <span className="col-span-2 whitespace-nowrap">Wärmeleitfähigkeit</span>
            <div className="col-span-3 flex items-center -ml-[24px]">
              <DRadio on /><span className="ml-[3px] w-[32px]">Obere</span><DRadio /><span className="ml-[4px] whitespace-nowrap">Untere Grenze</span>
            </div>
          </div>
        </GroupBox>
        <GroupBox title="Brand und Randbedingungen" h={136} mt={10}>
          <div className="flex items-center h-[16px] mt-[11px] ml-[6px]">
            <span className="w-[139px]">Branddauer</span>
            <span className="w-[68px] h-[16px] border border-[#d0d0d0] flex items-center justify-between text-[#999] pl-[2px] pr-[3px]">90 min<ChevronDown size={10} /></span>
          </div>
          <div className="flex mt-[6px] ml-[6px]">
            <span className="w-[63px] whitespace-nowrap">Randbedingungen</span>
            <div className="w-[90px] mt-[8px] flex flex-col items-center">
              <Flame id="f1" />
              <div className="flex items-center gap-[2px] my-[2px]"><Flame vertical id="f2" /><div className="w-[52px] h-[52px] bg-[#a0a0a0]" /><Flame vertical id="f3" /></div>
              <Flame id="f4" />
            </div>
            <div className="ml-[14px] mt-[7px] w-[64px] h-[47px] border-t-2 border-l-2 border-[#999] bg-[#f4f4f4] pl-[4px] pt-[3px] leading-[13px]">
              {["ETK", "Isolation", "20 °C"].map((t, i) => (
                <div key={t} className="flex items-center gap-[3px] h-[13.500px]">
                  <span className={"w-[12px] h-[12px] " + (i === 0 ? "bg-[linear-gradient(#401000,#f08010,#ffd020)]" : i === 1 ? "bg-[linear-gradient(135deg,#a87830,#e8c070,#a87830)]" : "bg-[#4da0ff]")} />{t}
                </div>
              ))}
            </div>
          </div>
        </GroupBox>
        <GroupBox title="Berechnung" h={57} mt={12}>
          <div className="flex items-center h-[16px] mt-[8px] ml-[6px]">
            <span className="w-[12px] h-[12px] border border-[#444] bg-white flex items-center justify-center mr-[4px]"><Check size={10} /></span>
            <span className="w-[123px]">Netzfeinheit automatisch</span>
            <DInput v="1,2" off /><span className="ml-[17px]">[cm]</span>
          </div>
          <div className="mt-[7px] ml-[88px] w-[74px] h-[20px] bg-[#e1e1e1] border border-[#adadad] flex items-center justify-center gap-[4px]">
            <span className="w-0 h-0 border-y-[6px] border-y-transparent border-l-[7px] border-l-[#1ea01e]" /><Und a="B" b="erechnen" />
          </div>
        </GroupBox>
      </div>
      <div className="w-[383px] h-[467px] mt-[-1px] bg-white border-l-2 border-t-2 border-[#a0a0a0] shrink-0">
        <HeatChart />
      </div>
    </div>
    <div className="absolute left-[48px] top-[487px] flex gap-[7px] text-[9.500px]">
      <div className="w-[80px] h-[18px] bg-[#e1e1e1] border-2 border-[#0078d7] flex items-center justify-center"><Und a="O" b="K" /></div>
      <div className="w-[78px] h-[18px] bg-[#e1e1e1] border border-[#adadad] flex items-center justify-center"><Und a="A" b="bbrechen" /></div>
    </div>
    <div className="h-[18px] border-t border-[#d8d8d8] flex items-center pl-[2px] text-[9.500px] relative">
      <span className="w-[113px] h-[14px] bg-[#e6e6e6] border border-[#d0d0d0] mr-[6px]" />Zeitverlaufsberechnung für t=90 abgeschlossen!
      <span className="absolute right-[2px] bottom-[1px] text-[#aaa] text-[8px] leading-[8px]">⋰</span>
    </div>
  </div>
);

/* ---------- page ---------- */

export default function App() {
  return (
    <div className={"relative w-[1600px] h-[900px] overflow-hidden flex flex-col bg-[#f3f2f1] " + ui}>
      <div className="h-[34px] bg-[#2b579a] flex items-center text-white relative shrink-0">
        <div className="ml-[6px] w-[25px] h-[26px] bg-[#000070] border border-[#b8c0d8] rounded-[2px] text-[10px] font-bold relative text-center leading-[28px] font-['Liberation_Sans',sans-serif]">
          B5<span className="absolute right-[1px] -top-[2px] text-[11px] leading-[14px] font-normal">+</span>
        </div>
        <File size={15} strokeWidth={1.500} className="ml-[9px]" />
        <Save size={15} strokeWidth={1.500} className="ml-[8px]" />
        <span className="ml-[7px] w-[16px] h-[16px] bg-[linear-gradient(135deg,#1a8fd0,#124a9c)] rounded-[1px] text-[9px] font-bold text-center leading-[16px] font-['Liberation_Sans',sans-serif]">W</span>
        <span className="ml-[10px] flex flex-col items-center gap-[1px]"><span className="w-[6px] border-t border-white" /><span className="w-0 h-0 border-x-[3px] border-x-transparent border-t-[3px] border-t-white" /></span>
        <div className="absolute left-[561px] top-[8px] text-[11.500px] leading-[16px] whitespace-nowrap">B5+ (Projekt: Beispiele FRILO-Lösungen) - B5+ Stahlbetonstütze 01/22C (R-2022-1/P07)</div>
        <div className="ml-auto flex items-center">
          <Minus size={13} strokeWidth={1.500} className="mr-[33px]" /><Square size={10} strokeWidth={1.500} className="mr-[35px]" /><X size={14} strokeWidth={1.500} className="mr-[16px]" />
        </div>
      </div>
      <div className="h-[28px] bg-[#f3f2f1] flex items-end text-[14px] text-[#444] shrink-0 relative">
        <div className="w-[76px] h-[28px] text-center leading-[28px] pr-[2px]">Datei</div>
        <div className="w-[66px] h-[28px] text-center text-[15px] font-bold border-b-[3px] border-[#2b579a] leading-[28px]">Start</div>
        <div className="ml-[21px] h-[28px] leading-[28px]">Ergebnisse</div>
        <div className="ml-auto mr-[5px] h-[28px] flex items-center gap-[5px] text-[11.500px] text-[#333] font-['Roboto',sans-serif]">
          <Chev /><HelpCircle size={16} strokeWidth={1.500} className="ml-[1px]" /><span className="-ml-[2px]">Hilfe</span><span className="w-0 h-0 border-x-[2.500px] border-x-transparent border-t-[3px] border-t-[#333]" />
        </div>
      </div>
      <Ribbon />
      <div className="flex-1 min-h-0 flex">
        <LeftPanel />
        <MainView />
      </div>
      <div className="h-[22px] bg-[#f3f2f1] border-t border-[#d0d0d0] shrink-0" />
      <ColumnDrawing />
      <Dialog />
    </div>
  );
}
